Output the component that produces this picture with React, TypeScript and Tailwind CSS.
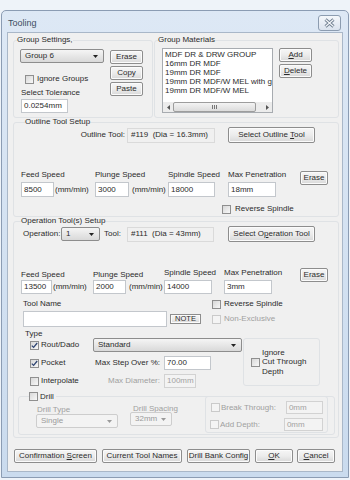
import React from "react";

type Box = { children?: React.ReactNode; className?: string };

function Btn({ children, className = "" }: Box) {
  return (
    <div
      className={`flex shrink-0 items-center justify-center rounded-[2px] border border-[#8d8d8d] bg-linear-to-b from-[#f6f6f6] via-[#ececec] to-[#d8d8d8] shadow-[inset_0_0_0_1px_#fbfbfb] ${className}`}
    >
      <span>{children}</span>
    </div>
  );
}

function Check({ on = false, off = false }: { on?: boolean; off?: boolean }) {
  return (
    <div
      className={`flex h-[9px] w-[9px] shrink-0 items-center justify-center border ${
        off ? "border-[#cacaca] bg-[#f4f4f4]" : "border-[#8f8f8f] bg-linear-to-br from-[#d8d8d8] to-[#f8f8f8]"
      }`}
    >
      {on && (
        <svg width="7" height="7" viewBox="0 0 7 7">
          <path d="M0.8 3.6 L2.6 5.4 L6.2 1" fill="none" stroke="#2f4573" strokeWidth="1.3" />
        </svg>
      )}
    </div>
  );
}

function Combo({ value, className = "", off = false }: { value: string; className?: string; off?: boolean }) {
  return (
    <div
      className={`flex shrink-0 items-center justify-between rounded-[2px] border pl-[4px] pr-[5px] ${
        off
          ? "border-[#cdcdcd] bg-[#f3f3f3] text-[#9a9a9a]"
          : "border-[#8d8d8d] bg-linear-to-b from-[#f5f5f5] to-[#d9d9d9]"
      } ${className}`}
    >
      <span>{value}</span>
      <svg width="5" height="3" viewBox="0 0 5 3">
        <path d="M0 0H5L2.5 3Z" fill={off ? "#9a9a9a" : "#222"} />
      </svg>
    </div>
  );
}

function Field({
  value = "",
  className = "",
  off = false,
  flat = false,
}: {
  value?: string;
  className?: string;
  off?: boolean;
  flat?: boolean;
}) {
  const look = flat
    ? "border-[#dadada] bg-[#f0f0f0] pl-[3px]"
    : off
    ? "border-[#d2d2d2] bg-[#f3f3f3] pl-[2px] text-[#a2a2a2]"
    : "border-[#c3c7cc] bg-white pl-[2px]";
  return <div className={`flex shrink-0 items-center overflow-hidden border ${look} ${className}`}>{value}</div>;
}

const materials = [
  "MDF DR & DRW GROUP",
  "16mm DR MDF",
  "19mm DR MDF",
  "19mm DR MDF/W MEL with g",
  "19mm DR MDF/W MEL",
];

export default function App() {
  return (
    <div className="h-[480px] w-[350px] overflow-hidden whitespace-nowrap bg-[#eef3f9] pl-[1px] pt-[10px] font-['Liberation_Sans',Arial,sans-serif] text-[8px] leading-[10px] text-[#2b2b2b]">
      <div className="h-[468px] w-[348px] rounded-t-[5px] border border-[#8b9cb3] bg-linear-to-b from-[#dde8f5] to-[#cadbee]">
        {/* title bar */}
        <div className="flex h-[21px] items-center pl-[6px] pr-[7px] pt-[3px]">
          <span className="text-[9px] text-[#3d4e62]">Tooling</span>
          <div className="ml-auto flex h-[16px] w-[23px] items-center justify-center rounded-[3px] border border-[#8c9cb0] bg-linear-to-b from-[#f4f7fb] to-[#dbe3ee]">
            <svg width="13" height="10" viewBox="0 0 13 10">
              <path d="M2.5 1.5 L10.5 8.5 M10.5 1.5 L2.5 8.5" stroke="#6f7e90" strokeWidth="3" />
              <path d="M2.5 1.5 L10.5 8.5 M10.5 1.5 L2.5 8.5" stroke="#f6f8fb" strokeWidth="1.1" />
            </svg>
          </div>
        </div>

        <div className="ml-[5px] h-[440px] w-[336px] border border-[#a9b7c8] bg-[#f0f0f0]">
          {/* group settings / materials */}
          <div className="mt-[3px] flex">
            <fieldset className="ml-[5px] h-[82px] w-[140px] rounded-[3px] border border-[#dfe2e5]">
              <legend className="ml-[3px] leading-[8px]">Group Settings,</legend>
              <div className="flex">
                <div className="ml-[6px] flex w-[84px] flex-col">
                  <Combo value="Group 6" className="mt-[5px] h-[14px] w-[84px]" />
                  <div className="ml-[5px] mt-[11px] flex h-[10px] items-center">
                    <Check />
                    <span className="ml-[3px]">Ignore Groups</span>
                  </div>
                  <div className="ml-[1px] mt-[4px]">Select Tolerance</div>
                  <Field value="0.0254mm" className="ml-[1px] mt-[1px] h-[14px] w-[47px]" />
                </div>
                <div className="ml-[6px] mt-[6px] flex flex-col gap-[2px]">
                  <Btn className="h-[14px] w-[33px]">Erase</Btn>
                  <Btn className="h-[14px] w-[33px]">Copy</Btn>
                  <Btn className="h-[14px] w-[33px]">Paste</Btn>
                </div>
              </div>
            </fieldset>

            <fieldset className="ml-[1px] h-[82px] w-[185px] rounded-[3px] border border-[#dfe2e5]">
              <legend className="ml-[3px] leading-[8px]">Group Materials</legend>
              <div className="flex">
                <div className="ml-[7px] mt-[4px] flex h-[65px] w-[111px] flex-col border border-[#a7abb0] bg-white">
                  <div className="flex-1 overflow-hidden pl-[2px] pt-[1px] leading-[9px]">
                    {materials.map((m) => (
                      <div key={m}>{m}</div>
                    ))}
                  </div>
                  <div className="flex h-[10px] items-center bg-[#ececec]">
                    <div className="flex h-full w-[10px] items-center justify-center">
                      <svg width="3" height="5" viewBox="0 0 3 5">
                        <path d="M3 0V5L0 2.5Z" fill="#555" />
                      </svg>
                    </div>
                    <div className="flex h-full w-[83px] items-center justify-center gap-[1px] rounded-[2px] border border-[#9d9d9d] bg-linear-to-b from-[#f4f4f4] to-[#dcdcdc]">
                      <span className="h-[4px] w-[1px] bg-[#777]" />
                      <span className="h-[4px] w-[1px] bg-[#777]" />
                      <span className="h-[4px] w-[1px] bg-[#777]" />
                    </div>
                    <div className="flex-1" />
                    <div className="flex h-full w-[10px] items-center justify-center">
                      <svg width="3" height="5" viewBox="0 0 3 5">
                        <path d="M0 0V5L3 2.5Z" fill="#555" />
                      </svg>
                    </div>
                  </div>
                </div>
                <div className="ml-[6px] mt-[4px] flex flex-col gap-[2px]">
                  <Btn className="h-[14px] w-[33px]">
                    <u>A</u>dd
                  </Btn>
                  <Btn className="h-[14px] w-[33px]">
                    <u>D</u>elete
                  </Btn>
                </div>
              </div>
            </fieldset>
          </div>

          {/* outline tool setup */}
          <fieldset className="ml-[5px] h-[99px] w-[326px] rounded-[3px] border border-[#dfe2e5]">
            <legend className="ml-[11px] leading-[8px]">Outline Tool Setup</legend>
            <div className="mt-[1px] flex h-[16px] items-center">
              <div className="w-[111px] text-right">Outline Tool:</div>
              <Field flat value="#119  (Dia = 16.3mm)" className="ml-[2px] h-[15px] w-[88px] whitespace-pre" />
              <Btn className="ml-[13px] h-[16px] w-[87px]">
                Select Outline <u>T</u>ool
              </Btn>
            </div>
            <div className="ml-[7px] mt-[27px] flex h-[12px] items-start">
              <div className="w-[74px]">Feed Speed</div>
              <div className="w-[73px]">Plunge Speed</div>
              <div className="w-[60px]">Spindle Speed</div>
              <div className="w-[72px]">Max Penetration</div>
              <Btn className="mt-[1px] h-[14px] w-[28px]">Erase</Btn>
            </div>
            <div className="ml-[7px] flex h-[15px] items-center">
              <div className="flex w-[74px] items-center">
                <Field value="8500" className="h-[15px] w-[33px]" />
                <span className="ml-[1px]">(mm/min)</span>
              </div>
              <div className="flex w-[73px] items-center">
                <Field value="3000" className="h-[15px] w-[34px]" />
                <span className="ml-[3px]">(mm/min)</span>
              </div>
              <div className="w-[60px]">
                <Field value="18000" className="h-[15px] w-[47px]" />
              </div>
              <Field value="18mm" className="h-[15px] w-[48px]" />
            </div>
            <div className="ml-[208px] mt-[7px] flex h-[10px] items-center">
              <Check />
              <span className="ml-[4px]">Reverse Spindle</span>
            </div>
          </fieldset>

          {/* operation tool setup */}
          <fieldset className="ml-[5px] h-[221px] w-[326px] rounded-[3px] border border-[#dfe2e5]">
            <legend className="ml-[7px] leading-[8px]">Operation Tool(s) Setup</legend>
            <div className="mt-[1px] flex h-[16px] items-center">
              <div className="ml-[9px] w-[38px]">Operation:</div>
              <Combo value="1" className="h-[14px] w-[39px]" />
              <div className="ml-[4px] w-[23px]">Tool:</div>
              <Field flat value="#111  (Dia = 43mm)" className="h-[15px] w-[87px] whitespace-pre" />
              <Btn className="ml-[14px] h-[16px] w-[87px]">
                Select O<u>p</u>eration Tool
              </Btn>
            </div>
            <div className="ml-[7px] mt-[26px] flex h-[12px] items-start">
              <div className="w-[72px] self-end">Feed Speed</div>
              <div className="w-[71px] self-end">Plunge Speed</div>
              <div className="w-[60px]">Spindle Speed</div>
              <div className="w-[76px]">Max Penetration</div>
              <Btn className="h-[14px] w-[28px]">Erase</Btn>
            </div>
            <div className="ml-[7px] flex h-[14px] items-center">
              <div className="flex w-[72px] items-center">
                <Field value="13500" className="h-[14px] w-[31px]" />
                <span className="ml-[1px]">(mm/min)</span>
              </div>
              <div className="flex w-[71px] items-center">
                <Field value="2000" className="h-[14px] w-[33px]" />
                <span className="ml-[3px]">(mm/min)</span>
              </div>
              <div className="w-[60px]">
                <Field value="14000" className="h-[14px] w-[48px]" />
              </div>
              <Field value="3mm" className="h-[14px] w-[48px]" />
            </div>

            <div className="mt-[5px] flex">
              <div className="ml-[9px] flex w-[189px] flex-col">
                <div>Tool Name</div>
                <div className="mt-[2px] flex items-center">
                  <Field className="h-[16px] w-[144px]" />
                  <Btn className="ml-[3px] h-[10px] w-[31px] rounded-none text-[7.5px]">NOTE</Btn>
                </div>
              </div>
              <div className="flex flex-col">
                <div className="flex h-[10px] items-center">
                  <Check />
                  <span className="ml-[3px]">Reverse Spindle</span>
                </div>
                <div className="mt-[5px] flex h-[10px] items-center text-[#a0a0a0]">
                  <Check off />
                  <span className="ml-[3px]">Non-Exclusive</span>
                </div>
              </div>
            </div>

            <div className="ml-[11px] mt-[2px] leading-[9px]">Type</div>
            <div className="flex">
              <div className="flex w-[229px] flex-col">
                <div className="flex h-[14px] items-center">
                  <div className="flex w-[79px] items-center pl-[16px]">
                    <Check on />
                    <span className="ml-[2px]">Rout/Dado</span>
                  </div>
                  <Combo value="Standard" className="h-[14px] w-[149px]" />
                </div>
                <div className="mt-[4px] flex h-[14px] items-center">
                  <div className="flex w-[77px] items-center pl-[16px]">
                    <Check on />
                    <span className="ml-[2px]">Pocket</span>
                  </div>
                  <div className="w-[69px] text-right">Max Step Over %:</div>
                  <Field value="70.00" className="ml-[4px] h-[14px] w-[47px]" />
                </div>
                <div className="mt-[4px] flex h-[14px] items-center">
                  <div className="flex w-[77px] items-center pl-[16px]">
                    <Check />
                    <span className="ml-[2px]">Interpolate</span>
                  </div>
                  <div className="w-[69px] text-right text-[#a0a0a0]">Max Diameter:</div>
                  <Field off value="100mm" className="ml-[4px] h-[14px] w-[32px]" />
                </div>
              </div>
              <div className="flex h-[48px] w-[77px] items-center rounded-[3px] border border-[#dfe2e5] pl-[7px]">
                <Check />
                <div className="ml-[2px] leading-[9.5px]">
                  <div>Ignore</div>
                  <div>Cut Through</div>
                  <div>Depth</div>
                </div>
              </div>
            </div>

            {/* drill */}
            <fieldset className="ml-[4px] mt-[4px] h-[43px] w-[317px] rounded-[3px] border border-[#dfe2e5]">
              <legend className="ml-[10px] flex items-center pr-[2px] leading-[9px]">
                <Check />
                <span className="ml-[2px]">Drill</span>
              </legend>
              <div className="flex items-start">
                <div className="ml-[17px] flex flex-col">
                  <div className="ml-[1px] mt-[5px] leading-[8px] text-[#a0a0a0]">Drill Type</div>
                  <Combo off value="Single" className="h-[14px] w-[82px]" />
                </div>
                <div className="ml-[12px] flex flex-col">
                  <div className="ml-[3px] mt-[4px] leading-[8px] text-[#a0a0a0]">Drill Spacing</div>
                  <Combo off value="32mm" className="mt-[-1px] h-[14px] w-[42px]" />
                </div>
                <div className="ml-[27px] mt-[-5px] h-[37px] w-[123px] rounded-[3px] border border-[#dfe2e5] text-[#a0a0a0]">
                  <div className="mt-[4px] flex h-[13px] items-center pl-[5px] pr-[4px]">
                    <Check off />
                    <span className="ml-[1px] flex-1">Break Through:</span>
                    <Field off value="0mm" className="h-[13px] w-[37px]" />
                  </div>
                  <div className="mt-[4px] flex h-[13px] items-center pl-[4px] pr-[4px]">
                    <Check off />
                    <span className="ml-[1px] flex-1">Add Depth:</span>
                    <Field off value="0mm" className="h-[13px] w-[39px]" />
                  </div>
                </div>
              </div>
            </fieldset>
          </fieldset>

          {/* bottom buttons */}
          <div className="ml-[6px] mt-[11px] flex">
            <Btn className="h-[14px] w-[83px]">
              Confirmation <u>S</u>creen
            </Btn>
            <Btn className="ml-[5px] h-[14px] w-[80px]">Current Tool Names</Btn>
            <Btn className="ml-[5px] h-[14px] w-[63px]">Drill Bank Config</Btn>
            <Btn className="ml-[5px] h-[14px] w-[38px]">
              <u>O</u>K
            </Btn>
            <Btn className="ml-[4px] h-[14px] w-[38px]">
              <u>C</u>ancel
            </Btn>
          </div>
        </div>
      </div>
    </div>
  );
}
